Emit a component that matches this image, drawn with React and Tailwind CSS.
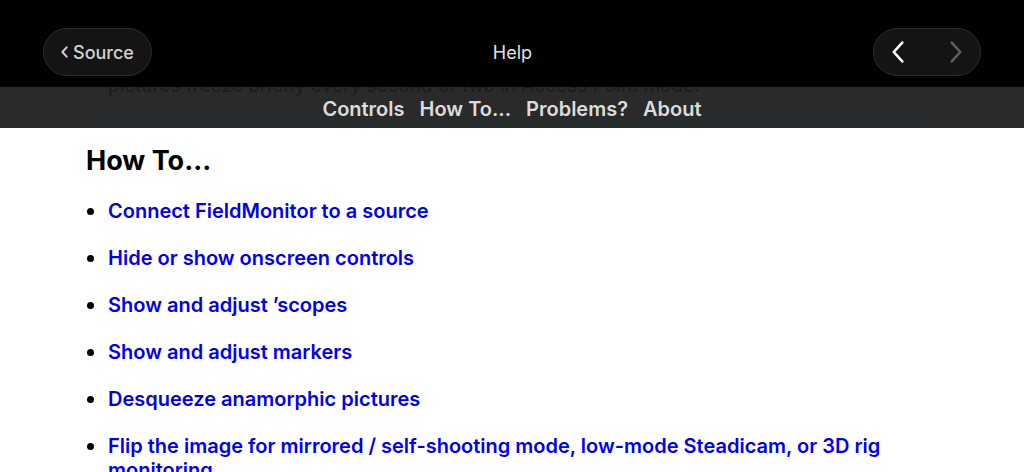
const links = [
  'Connect FieldMonitor to a source',
  'Hide or show onscreen controls',
  'Show and adjust \u2019scopes',
  'Show and adjust markers',
  'Desqueeze anamorphic pictures',
  'Flip the image for mirrored / self-shooting mode, low-mode Steadicam, or 3D rig monitoring',
];

function Chevron({ dir = 'left', className = '', width = 3 }) {
  return (
    <svg viewBox="0 0 16 28" fill="none" stroke="currentColor" strokeWidth={width} strokeLinecap="round" strokeLinejoin="round" className={className}>
      {dir === 'left' ? <polyline points="13 3 3 14 13 25" /> : <polyline points="3 3 13 14 3 25" />}
    </svg>
  );
}

export default function App() {
  return (
    <div className="w-[1024px] h-[472px] overflow-hidden bg-white font-['Inter',sans-serif]">
      <header className="h-[87px] bg-black flex items-start justify-between px-[43px] pt-[28px]">
        <button className="h-[48px] w-[109px] rounded-full bg-[#141414] border border-[#2c2c2c] flex items-center justify-center gap-[5px] text-[#d2d2d2] text-[18px] font-medium">
          <Chevron className="w-[7px] h-[12px]" width={4.5} />
          <span>Source</span>
        </button>
        <div className="h-[48px] flex items-center text-[18px] text-[#e2e2e2]">Help</div>
        <div className="h-[48px] w-[108px] rounded-full bg-[#141414] border border-[#2c2c2c] flex items-center justify-between px-[17px]">
          <Chevron className="w-[14px] h-[24px] text-white" />
          <Chevron dir="right" className="w-[14px] h-[24px] text-[#5e5e5e]" />
        </div>
      </header>

      <nav className="h-[41px] bg-[#2a2a2a] overflow-hidden flex flex-col">
        <div className="h-[10px] overflow-hidden shrink-0">
          <div className="-mt-[12px] pl-[108px] text-[19px] leading-[22px] text-[#1c1c1c] whitespace-nowrap">
            pictures freeze briefly every second or two in Access Point mode.
          </div>
        </div>
        <div className="flex justify-center gap-[15px] text-[20px] font-semibold text-[#dcdcdc] leading-[24px]">
          <span>Controls</span>
          <span>How To...</span>
          <span>Problems?</span>
          <span>About</span>
        </div>
        <div className="mx-[86px] mt-auto mb-[4px] h-[2px] bg-[#1b3033]" />
      </nav>

      <main className="pl-[86px] pr-[84px] pt-[14px]">
        <h2 className="text-[27px] font-bold text-black leading-[38px]">How To...</h2>
        <ul className="mt-[19px] flex flex-col gap-[23px]">
          {links.map((t) => (
            <li key={t} className="flex text-[20px] leading-[24px] font-semibold">
              <span className="w-[22px] h-[24px] shrink-0 flex items-center pl-[1px]">
                <span className="w-[7px] h-[7px] rounded-full bg-black" />
              </span>
              <a className="text-[#0000ee]">{t}</a>
            </li>
          ))}
        </ul>
      </main>
    </div>
  );
}
